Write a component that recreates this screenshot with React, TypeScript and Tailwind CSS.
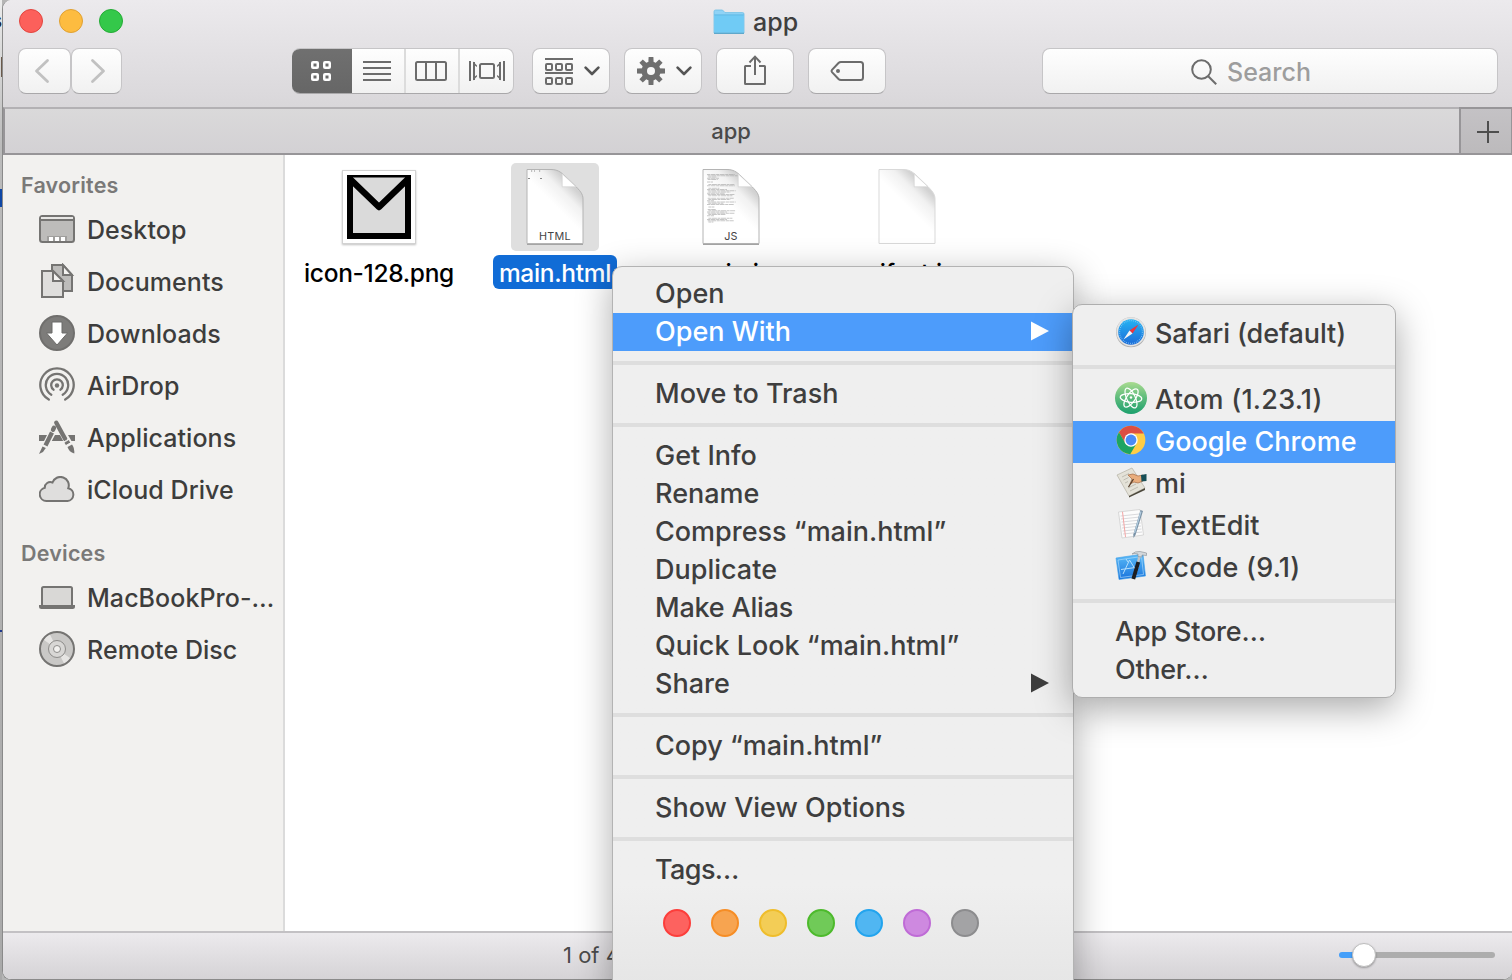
import React from "react";

type Kids = { children?: React.ReactNode };

const btn =
  "flex h-[46px] shrink-0 items-center justify-center rounded-[8px] border border-[#c6c5c7] border-b-[#a9a8aa] bg-linear-to-b from-[#fefefe] to-[#f1f1f1]";

function Chevron() {
  return (
    <svg width="16" height="10" viewBox="0 0 16 10" fill="none" stroke="#555" strokeWidth="2.6" strokeLinecap="round" strokeLinejoin="round">
      <path d="M1.6 1.6 8 8l6.4-6.4" />
    </svg>
  );
}

function TrafficLights() {
  return (
    <div className="flex gap-4">
      <span className="size-6 rounded-full border border-[#e2453f] bg-[#fc605b]" />
      <span className="size-6 rounded-full border border-[#dfa032] bg-[#fdbc40]" />
      <span className="size-6 rounded-full border border-[#24ab35] bg-[#34c84a]" />
    </div>
  );
}

function FolderIcon() {
  return (
    <svg width="32" height="26" viewBox="0 0 32 26">
      <path d="M1 2.5Q1 1 2.5 1H9.500l2.500 2.600H29.500Q31 3.600 31 5V24H1Z" fill="#8fd3f6" stroke="#6fbfe6" strokeWidth=".8" />
      <path d="M1.300 6H30.700V23.500H1.300Z" fill="#70cbf5" />
      <path d="M1.300 5.900H30.700" stroke="#5cb6e2" strokeWidth=".9" />
      <path d="M1 24.300H31" stroke="#55a3c8" strokeWidth="1.200" />
    </svg>
  );
}

function GearIcon() {
  return (
    <svg width="28" height="28" viewBox="-14 -14 28 28" fill="#6f6f6f">
      {[0, 45, 90, 135].map((a) => (
        <path key={a} d="M-2.400-14H2.400L3 0 2.400 14H-2.400L-3 0Z" transform={`rotate(${a})`} />
      ))}
      <circle r="9.600" />
      <circle r="4" fill="#f8f8f8" />
    </svg>
  );
}

function Toolbar() {
  return (
    <div className="flex h-[46px] items-center pl-[15px]">
      <div className={btn + " w-[53px] pr-[6px]"}>
        <svg width="16" height="26" viewBox="0 0 16 26" fill="none" stroke="#c1c1c1" strokeWidth="2.800" strokeLinecap="round" strokeLinejoin="round"><path d="M13.500 2.500 2.500 13l11 10.500" /></svg>
      </div>
      <div className={btn + " w-[51px] pl-[3px]"}>
        <svg width="16" height="26" viewBox="0 0 16 26" fill="none" stroke="#c1c1c1" strokeWidth="2.800" strokeLinecap="round" strokeLinejoin="round"><path d="M2.500 2.500 13.500 13 2.500 23.500" /></svg>
      </div>

      <div className="ml-[170px] flex h-[46px] w-[222px] shrink-0 overflow-hidden rounded-[8px] border border-l-0 border-[#c6c5c7] border-b-[#a9a8aa] bg-linear-to-b from-[#fefefe] to-[#f1f1f1]">
        <div className="-my-px flex w-[60px] items-center justify-center bg-linear-to-b from-[#707070] to-[#666] pr-[2px]">
          <svg width="22" height="22" viewBox="0 0 22 22" fill="none" stroke="#fff" strokeWidth="2.500">
            <rect x="2.250" y="2.250" width="5.500" height="5.500" rx=".8" />
            <rect x="14.250" y="2.250" width="5.500" height="5.500" rx=".8" />
            <rect x="2.250" y="14.250" width="5.500" height="5.500" rx=".8" />
            <rect x="14.250" y="14.250" width="5.500" height="5.500" rx=".8" />
          </svg>
        </div>
        <div className="flex w-[54px] items-center justify-center border-r-2 border-[#dcdcdc] pr-[2px]">
          <svg width="28" height="20" viewBox="0 0 28 20" stroke="#6c6c6c" strokeWidth="2"><path d="M0 1h28M0 7h28M0 13h28M0 19h28" /></svg>
        </div>
        <div className="flex w-[54px] items-center justify-center border-r-2 border-[#dcdcdc] pr-[2px]">
          <svg width="32" height="20" viewBox="0 0 32 20" fill="none" stroke="#6c6c6c" strokeWidth="2"><rect x="1" y="1" width="30" height="18" rx="1.500" /><path d="M11 1v18M21 1v18" /></svg>
        </div>
        <div className="flex w-[53px] items-center justify-center">
          <svg width="36" height="20" viewBox="0 0 36 20" fill="none" stroke="#6c6c6c" strokeWidth="2">
            <path d="M1 0v20M35 0v20M5 1v18M31 1v18" />
            <path d="M4 .5 8 4.500V6L5 4ZM4 19.500 8 15.500V14L5 16ZM32 .5 28 4.500V6l3-2ZM32 19.500 28 15.500V14l3 2Z" fill="#6c6c6c" stroke="none" />
            <rect x="11" y="3" width="14" height="14" rx="1.500" />
          </svg>
        </div>
      </div>

      <div className={btn + " ml-[18px] w-[78px] gap-[11px] pl-[2px]"}>
        <svg width="28" height="28" viewBox="0 0 28 28" fill="none" stroke="#6c6c6c" strokeWidth="2">
          <path d="M0 2h28M0 16h28" />
          {[1, 11, 21].map((x) => (
            <g key={x}><rect x={x} y="7" width="6" height="6" rx="1" /><rect x={x} y="21" width="6" height="6" rx="1" /></g>
          ))}
        </svg>
        <Chevron />
      </div>
      <div className={btn + " ml-[14px] w-[78px] gap-[11px] pl-[2px]"}><GearIcon /><Chevron /></div>
      <div className={btn + " ml-[14px] w-[78px] pb-[3px]"}>
        <svg width="24" height="32" viewBox="0 0 24 32" fill="none" stroke="#6c6c6c" strokeWidth="2"><path d="M8 12H2.500Q2 12 2 12.500V29.500Q2 30 2.500 30H21.500Q22 30 22 29.500V12.500Q22 12 21.500 12H16" /><path d="M12 21V3M6.500 8.500 12 2.600l5.500 5.900" /></svg>
      </div>
      <div className={btn + " ml-[14px] w-[78px]"}>
        <svg width="36" height="22" viewBox="0 0 36 22" fill="none" stroke="#6c6c6c" strokeWidth="2"><path d="M12 2H31.500Q34 2 34 4.500V17.500Q34 20 31.500 20H12Q10.500 20 9.500 19L3 12.200Q2 11 3 9.800L9.500 3Q10.500 2 12 2Z" /><circle cx="9" cy="11" r="2" fill="#6c6c6c" stroke="none" /></svg>
      </div>
      <div className={btn + " ml-[156px] w-[456px] gap-[10px] pr-[38px] text-[25px] font-[450] text-[#9d9d9d]"}>
        <svg className="mt-[2px]" width="26" height="26" viewBox="0 0 26 26" fill="none" stroke="#6c6c6c" strokeWidth="2"><circle cx="10.500" cy="10.500" r="9.300" /><path d="m17.200 17.200 8 8" /></svg>
        <span className="mt-[3px]">Search</span>
      </div>
    </div>
  );
}

const DesktopIcon = () => (
  <svg width="36" height="28" viewBox="0 0 36 28"><rect x="1" y="1" width="34" height="26" rx="2.500" fill="#bdbcba" stroke="#757472" strokeWidth="2" /><path d="M2 2h32v2H2Z" fill="#e8e7e5" /><path d="M1 5h34" stroke="#757472" strokeWidth="2" /><path d="M8 26v-5h20v5" fill="#a09f9d" /><path d="M10 22h4v4h-4ZM16 22h4v4h-4ZM22 22h4v4h-4Z" fill="#fff" /></svg>
);
const DocumentsIcon = () => (
  <svg width="36" height="36" viewBox="0 0 36 36" stroke="#757472" strokeWidth="2"><path d="M13 2H24L33 12V28H13Z" fill="#bdbcba" /><path d="M24 2V12H33Z" fill="#f4f3f1" /><path d="M3 8H14L24 18V34H3Z" fill="#dfdedc" /><path d="M14 8V18H24Z" fill="#f4f3f1" /></svg>
);
const DownloadsIcon = () => (
  <svg width="36" height="36" viewBox="0 0 36 36"><circle cx="18" cy="18" r="17" fill="#7d7c7a" stroke="#706f6d" strokeWidth="2" /><path d="M13 7H23V18H28.500L18 30 7.500 18H13Z" fill="#fff" stroke="#6b6a68" /></svg>
);
const AirDropIcon = () => (
  <svg width="36" height="36" viewBox="0 0 36 36" fill="none" stroke="#757472" strokeWidth="2.300" strokeLinecap="round"><circle cx="18" cy="18.500" r="2.200" fill="#757472" stroke="none" /><path d="M14.500 22.700A5.800 5.800 0 1 1 21.500 22.700M12.300 27.700A11.200 11.200 0 1 1 23.700 27.700M9.800 32.600A16.700 16.700 0 1 1 26.200 32.600" /></svg>
);
const ApplicationsIcon = () => (
  <svg width="36" height="36" viewBox="0 0 36 36" stroke="#757472" fill="#757472">
    <path d="M0 16H8L5 22H0ZM16 16H21L24.200 22H12.800ZM29 16H36V22H32.500Z" stroke="none" />
    <path d="M6.500 26.500 13 13.500" strokeWidth="4.400" />
    <path d="M14 10.800 15 8.800" strokeWidth="4.400" strokeLinecap="round" />
    <path d="M3.500 27.500 6.800 29 4 33 0 35Z" stroke="none" />
    <path d="M17.300 3.800 26.200 20" strokeWidth="4.400" strokeLinecap="round" />
    <path d="M27.600 22.400 29.200 25" strokeWidth="5" />
    <path d="M28.500 28 33 25.500Q35.500 28.500 35.300 34.500 30 33 28.500 28Z" stroke="none" />
    <path d="m25 22.800 5-3M27 26.500l4.500-2.500" stroke="#f2f1ef" strokeWidth="1" />
  </svg>
);
const CloudIcon = () => (
  <svg width="36" height="26" viewBox="0 0 36 26"><path d="M7.500 25A6.700 6.700 0 0 1 5.800 11.800 5.500 5.500 0 0 1 13.500 6.500 8.300 8.300 0 0 1 29.300 12.200 6.500 6.500 0 0 1 28.500 25Z" fill="#dfdedd" stroke="#757472" strokeWidth="2" /></svg>
);
const LaptopIcon = () => (
  <svg width="36" height="24" viewBox="0 0 36 24"><rect x="3" y="2" width="30" height="19" rx="1.500" fill="#d9d8d6" stroke="#757472" strokeWidth="2" /><path d="M0 20H36V21.500Q36 24 33.500 24H2.500Q0 24 0 21.500Z" fill="#757472" /></svg>
);
const DiscIcon = () => (
  <svg width="36" height="36" viewBox="0 0 36 36"><circle cx="18" cy="18" r="17" fill="#c9c8c6" stroke="#757472" strokeWidth="2" /><path d="M18 18 5 9A16 16 0 0 1 11 3.600ZM18 18 31 27A16 16 0 0 1 25 32.400Z" fill="#e6e5e3" /><circle cx="18" cy="18" r="8.500" fill="#d8d7d5" stroke="#8d8c8a" strokeWidth="1" /><circle cx="18" cy="18" r="3.500" fill="#f2f1ef" stroke="#8d8c8a" strokeWidth="1" /></svg>
);

function SideItem({ icon, children }: { icon: React.ReactNode } & Kids) {
  return (
    <li className="flex h-[52px] items-center pl-[36px] text-[25px] font-[450] tracking-[.06px] text-[#3d3d3c]">
      <span className="flex w-[36px] shrink-0 justify-center pb-[2px]">{icon}</span>
      <span className="ml-[12px] whitespace-nowrap">{children}</span>
    </li>
  );
}

function Sidebar() {
  return (
    <nav className="w-[282px] shrink-0 border-r-2 border-[#dbdbdb] bg-[#f2f1ef]">
      <h2 className="mt-[9px] flex h-[40px] items-center pl-[18px] pt-[3px] text-[21.5px] font-semibold tracking-[.2px] text-[#7a7978]">Favorites</h2>
      <ul>
        <SideItem icon={<DesktopIcon />}>Desktop</SideItem>
        <SideItem icon={<DocumentsIcon />}>Documents</SideItem>
        <SideItem icon={<DownloadsIcon />}>Downloads</SideItem>
        <SideItem icon={<AirDropIcon />}>AirDrop</SideItem>
        <SideItem icon={<ApplicationsIcon />}>Applications</SideItem>
        <SideItem icon={<CloudIcon />}>iCloud Drive</SideItem>
      </ul>
      <h2 className="mt-[16px] flex h-[40px] items-center pl-[18px] pt-[3px] text-[21.5px] font-semibold tracking-[.2px] text-[#7a7978]">Devices</h2>
      <ul>
        <SideItem icon={<LaptopIcon />}>MacBookPro-…</SideItem>
        <SideItem icon={<DiscIcon />}>Remote Disc</SideItem>
      </ul>
    </nav>
  );
}

function Page({ label, code, dots, faint }: { label?: string; code?: boolean; dots?: boolean; faint?: boolean }) {
  const widths = [28, 30, 8, 12, 10, 0, 6, 0, 26, 28, 0, 11, 20, 28, 22, 18, 27, 24, 0, 26, 22, 7, 28, 15, 27, 0, 6, 0, 8, 27, 20, 27, 17, 7, 0, 24, 20, 26, 5];
  return (
    <svg width="64" height="82" viewBox="0 0 64 82">
      <defs>
        <linearGradient id="fold" x1="0" y1="77" x2="60" y2="17" gradientUnits="userSpaceOnUse"><stop offset=".58" stopColor="#fff" /><stop offset=".76" stopColor="#f1f1f1" /><stop offset=".88" stopColor="#d2d2d2" /></linearGradient>
      </defs>
      <path d="M4 3.500H28C34 3.500 37.500 5.700 42 10L51 18.700C57 24.500 60 28 60 33V77.500H4Z" fill="url(#fold)" stroke={faint ? "#d9d9d9" : "#b4b4b4"} />
      {!faint && <path d="M4 78.500H60" stroke="#a5a5a5" />}
      {code && widths.map((w, i) => <path key={i} d={`M${8 + (i % 3) * 0.7} ${8.5 + i * 1.25}h${w}`} stroke="#a9a9a9" strokeWidth=".65" strokeDasharray="3 .5 5 .6" />)}
      <path d="M39.200 7.800V20.800H53Z" fill="#fff" stroke="#d2d2d2" strokeWidth=".7" />
      {dots && <path d="M8 5h1.200M11 5h1M16 5h1.200M5 12.500h2M17 12.500h2" stroke="#888" strokeWidth="1.200" />}
      {label && <text x="32" y="74" textAnchor="middle" fontSize="10.800" letterSpacing=".3" fill="#444">{label}</text>}
    </svg>
  );
}

function FileItem({ icon, name, selected }: { icon: React.ReactNode; name: string; selected?: boolean }) {
  return (
    <div className="flex w-[176px] shrink-0 flex-col items-center">
      <div className={"flex size-[88px] items-center justify-center rounded-[5px] " + (selected ? "bg-[#dfdfdf]" : "")}>{icon}</div>
      <div className={"mt-[4px] flex h-[34px] items-center whitespace-nowrap rounded-[6px] px-[6px] pt-[2px] text-[24.5px] font-[450] tracking-[-.32px] " + (selected ? "bg-[#116cd6] text-white" : "text-black")}>{name}</div>
    </div>
  );
}

function MailImage() {
  return (
    <div className="size-[74px] border border-[#d2d2d2] bg-white p-[4px] shadow-[0_1px_2px_rgba(0,0,0,.25)]">
      <svg width="64" height="64" viewBox="0 0 64 64"><rect width="64" height="64" fill="#000" /><rect x="6" y="2" width="52" height="56" fill="#dadada" /><path d="M2 3 32 32 62 3" fill="none" stroke="#000" strokeWidth="6.500" strokeLinejoin="round" /><path d="M0 1.500h64" stroke="#000" strokeWidth="2" /></svg>
    </div>
  );
}

function Item({ children, active, arrow }: { active?: boolean; arrow?: boolean } & Kids) {
  return (
    <div className={"flex h-[38px] items-center justify-between pl-[42px] pr-[24px] " + (active ? "bg-[#4d9cfb] text-white" : "")}>
      <span className="whitespace-nowrap pb-[2px]">{children}</span>
      {arrow && <svg width="18" height="20" viewBox="0 0 18 20" className="-mt-[2px]" fill="currentColor"><path d="M0 .5 18 10 0 19.500Z" /></svg>}
    </div>
  );
}

const Sep = () => <div className="my-[10px] h-[4px] bg-[#dedede]" />;

const SafariIcon = () => (
  <svg width="32" height="32" viewBox="0 0 32 32">
    <defs><linearGradient id="saf" x1="0" y1="0" x2="0" y2="1"><stop stopColor="#25b4f3" /><stop offset="1" stopColor="#1c6bd8" /></linearGradient></defs>
    <circle cx="16" cy="16.300" r="15" fill="#b0b0b0" /><circle cx="16" cy="15.800" r="14.600" fill="#e4e4e4" />
    <circle cx="16" cy="16" r="12.800" fill="url(#saf)" />
    <circle cx="16" cy="16" r="11.400" fill="none" stroke="#7fc4f4" strokeWidth="1.200" strokeDasharray=".8 1.190" />
    <path d="M23.500 8.500 14.500 14.500 17.500 17.500Z" fill="#f0343a" /><path d="M8.500 23.500 14.500 14.500 17.500 17.500Z" fill="#f5f5f5" />
  </svg>
);
const AtomIcon = () => (
  <svg width="32" height="32" viewBox="0 0 32 32">
    <defs><linearGradient id="atm" x1="0" y1="0" x2="0" y2="1"><stop stopColor="#a9db90" /><stop offset=".5" stopColor="#5dbb7c" /><stop offset="1" stopColor="#1ba06d" /></linearGradient></defs>
    <circle cx="16" cy="16" r="16" fill="url(#atm)" />
    <g fill="none" stroke="#fff" strokeWidth="1.200"><ellipse cx="16" cy="16" rx="10.800" ry="4.300" transform="rotate(5 16 16)" /><ellipse cx="16" cy="16" rx="10.800" ry="4.300" transform="rotate(65 16 16)" /><ellipse cx="16" cy="16" rx="10.800" ry="4.300" transform="rotate(125 16 16)" /></g>
    <circle cx="16" cy="15.500" r="1.200" fill="#fff" />
  </svg>
);
const ChromeIcon = () => (
  <svg width="30" height="30" viewBox="1 1 46 46">
    <circle cx="24" cy="24" r="22" fill="#ffcd46" />
    <path d="M5.540 12.030A22 22 0 0 1 43.600 14H24L15.340 29Z" fill="#dd4f43" />
    <path d="M5.540 12.030 15.340 29 32.660 29 22.860 45.970A22 22 0 0 1 5.540 12.030Z" fill="#1da462" />
    <circle cx="24" cy="24" r="10.300" fill="#fff" /><circle cx="24" cy="24" r="8.300" fill="#4a8bf5" />
  </svg>
);
const MiIcon = () => (
  <svg width="32" height="32" viewBox="0 0 32 32">
    <path d="M2 9 17 2 30 22 14 30Z" fill="#e4e2d8" stroke="#b3b0a4" strokeWidth=".7" /><path d="M14 30 30 22V24L14 31.500Z" fill="#4b473b" />
    <path d="M7 11l7-3.500M8.500 14l5-2.500M10 17l3-1.500M13 22l8-4M15 25l8-4" stroke="#b5b2a8" strokeWidth=".8" />
    <path d="M15 18 17 13 13 9 18 8 23 10 28 9V15L23 17 19 16Z" fill="#e9ad7d" stroke="#a46842" strokeWidth=".7" />
    <path d="M26 9 31.500 8V15L26.500 15.500Z" fill="#174e56" /><path d="m13.500 21 5-8" stroke="#533d2c" strokeWidth="1.300" />
  </svg>
);
const TextEditIcon = () => (
  <svg width="32" height="32" viewBox="0 0 32 32">
    <path d="M3.500 4 25 1.500 28.500 27 7 30Z" fill="#fcfcfc" stroke="#cfcfcf" strokeWidth=".8" />
    <path d="m5.500 8 19-2M6 11l19-2M6.500 14l19-2M6.800 17l19-2M7 20l19-2M7.500 23l19-2M8 26l19-2" stroke="#d0d0d4" strokeWidth=".8" />
    <path d="M7.500 3.800 10.500 29" stroke="#f4a5a5" strokeWidth="1" />
    <path d="M25.500 2 28 3 20.500 27 18.500 30 18.300 26.500Z" fill="#7890a5" /><path d="M26 3.500 19.500 25" stroke="#b4cde0" strokeWidth="1.200" />
  </svg>
);
const XcodeIcon = () => (
  <svg width="32" height="32" viewBox="0 0 32 32">
    <defs><linearGradient id="xc" x1="0" y1="0" x2="0" y2="1"><stop stopColor="#5bbcf8" /><stop offset="1" stopColor="#1873dc" /></linearGradient></defs>
    <path d="M1 8 28 4 30.500 26 4 29.500Z" fill="url(#xc)" stroke="#3f9fe8" strokeWidth=".6" />
    <path d="M3 10 26.500 6.500 28.500 24.500 5.500 27.500Z" fill="none" stroke="#b8e1fc" strokeWidth=".6" />
    <path d="M8 24 14.500 10 22 22M6 19.500 24 17M11 9l2 3" fill="none" stroke="#b5dffc" strokeWidth="1" />
    <path d="M25 5 22.500 14" stroke="#c0c4c8" strokeWidth="2.600" /><path d="M23.300 12 18.300 29" stroke="#1d1d20" strokeWidth="3.800" />
    <path d="M17 4Q20 1 25 1.500L31.500 3V5.500L27 5V7L23 6.500V4Q20 3 17 4Z" fill="#d3d8dc" stroke="#858b91" strokeWidth=".6" />
  </svg>
);

function AppItem({ icon, active, children }: { icon: React.ReactNode; active?: boolean } & Kids) {
  return (
    <div className={"flex h-[42px] items-center pl-[42px] " + (active ? "bg-[#4d9cfb] text-white" : "")}>
      <span className="-mt-[4px] flex w-[32px] shrink-0 justify-center">{icon}</span>
      <span className="ml-[8px] whitespace-nowrap pb-[2px]">{children}</span>
    </div>
  );
}

function ContextMenu() {
  return (
    <div className="absolute left-[612px] top-[266px] h-[730px] w-[462px] rounded-t-[10px] border border-[#b3b3b3] bg-[#efefef] bg-linear-to-b from-[#efefef] from-85% to-[#e5e5e5] pt-[8px] text-[27px] font-[450] text-[#3e3e3e] shadow-[0_10px_36px_rgba(0,0,0,.32)]">
      <Item>Open</Item>
      <Item active arrow>Open With</Item>
      <Sep />
      <Item>Move to Trash</Item>
      <Sep />
      <Item>Get Info</Item>
      <Item>Rename</Item>
      <Item>Compress “main.html”</Item>
      <Item>Duplicate</Item>
      <Item><span className="tracking-[-.2px]">Make Alias</span></Item>
      <Item>Quick Look “main.html”</Item>
      <Item arrow>Share</Item>
      <Sep />
      <Item>Copy “main.html”</Item>
      <Sep />
      <Item>Show View Options</Item>
      <Sep />
      <Item><span className="tracking-[-.6px]">Tags…</span></Item>
      <div className="mt-[20px] flex gap-5 pl-[50px]">
        <span className="size-7 rounded-full border-2 border-[#fc3e3b] bg-[#fd625f]" />
        <span className="size-7 rounded-full border-2 border-[#f68d25] bg-[#f7a450]" />
        <span className="size-7 rounded-full border-2 border-[#efbd2b] bg-[#f3cd56]" />
        <span className="size-7 rounded-full border-2 border-[#4dba2c] bg-[#70ca58]" />
        <span className="size-7 rounded-full border-2 border-[#22a4ee] bg-[#50b6f2]" />
        <span className="size-7 rounded-full border-2 border-[#bf6bd6] bg-[#ce89e0]" />
        <span className="size-7 rounded-full border-2 border-[#8c8c8e] bg-[#a3a3a5]" />
      </div>
    </div>
  );
}

function SubMenu() {
  return (
    <div className="absolute left-[1072px] top-[304px] h-[394px] w-[324px] rounded-[10px] border border-[#aeaeae] bg-[#efefef] pt-[8px] text-[27px] font-[450] text-[#3e3e3e] shadow-[0_10px_36px_rgba(0,0,0,.34)]">
      <AppItem icon={<SafariIcon />}><span className="tracking-[-.1px]">Safari (default)</span></AppItem>
      <Sep />
      <AppItem icon={<AtomIcon />}><span className="tracking-[.25px]">Atom (1.23.1)</span></AppItem>
      <AppItem icon={<ChromeIcon />} active>Google Chrome</AppItem>
      <AppItem icon={<MiIcon />}>mi</AppItem>
      <AppItem icon={<TextEditIcon />}>TextEdit</AppItem>
      <AppItem icon={<XcodeIcon />}><span className="tracking-[.2px]">Xcode (9.1)</span></AppItem>
      <Sep />
      <Item><span className="tracking-[-.2px]">App Store…</span></Item>
      <Item><span className="tracking-[-.3px]">Other…</span></Item>
    </div>
  );
}

export default function App() {
  return (
    <div className="relative flex h-[980px] w-[1512px] overflow-hidden bg-[#b5b5b5] font-['Inter','Liberation_Sans',sans-serif] leading-none">
      <div className="flex w-[2px] shrink-0 flex-col items-end overflow-hidden bg-linear-to-b from-[#ececec] via-[#bbb] via-15% to-[#a9a9a9] text-[22px] text-[#1d2730]">
        <span className="mt-[9px] h-[22px] font-bold">s</span>
        <span className="mt-[26px] h-[20px] w-px bg-[#6b5a4c]" />
        <span className="mt-[112px] h-[18px] w-[2px] bg-[#0f47a5]" />
        <span className="mt-[423px] h-[2px] w-[2px] bg-[#203a8c]" />
      </div>
      <div className="flex h-[980px] w-[1510px] shrink-0 flex-col overflow-hidden rounded-l-[9px] rounded-br-[9px] border-b border-l border-[#8a8a8a] bg-white">
        <header className="h-[107px] shrink-0 bg-linear-to-b from-[#eceaed] to-[#d9d7da]">
          <div className="grid h-[48px] grid-cols-[710px_1fr] items-start">
            <div className="pl-[16px] pt-[9px]"><TrafficLights /></div>
            <div className="flex items-center gap-[8px] pt-[8px] text-[25px] font-[450] text-[#3f3f3f]">
              <FolderIcon />
              <span className="pt-[2px]">app</span>
            </div>
          </div>
          <Toolbar />
        </header>
        <div className="flex h-[48px] shrink-0">
          <div className="flex w-[1456px] items-center justify-center border-y-2 border-l-2 border-t-[#b3b1b4] border-b-[#979598] border-l-[#979598] bg-linear-to-b from-[#dad9da] to-[#d3d1d4] pr-[2px] text-[22px] font-[450] text-[#4a4a4a]">app</div>
          <div className="flex w-[53px] items-center justify-center border-y-2 border-l-2 border-r border-[#979598] bg-linear-to-b from-[#c4c2c5] to-[#bcbabc] pl-[4px] pt-[2px]">
            <svg width="22" height="22" viewBox="0 0 22 22" stroke="#4e4e4e" strokeWidth="2"><path d="M0 11h22M11 0v22" /></svg>
          </div>
        </div>
        <div className="flex h-[776px] shrink-0">
          <Sidebar />
          <main className="flex flex-1 items-start pl-[6px] pt-[8px]">
            <FileItem icon={<MailImage />} name="icon-128.png" />
            <FileItem icon={<Page label="HTML" dots />} name="main.html" selected />
            <FileItem icon={<Page label="JS" code />} name="main.js" />
            <FileItem icon={<Page faint />} name="manifest.json" />
          </main>
        </div>
        <footer className="flex flex-1 items-center border-t-2 border-[#c3c1c4] bg-linear-to-b from-[#eceaed] to-[#d5d3d6] pb-[2px] text-[22px] text-[#4b4b4b]">
          <span className="ml-[560px] w-[200px] whitespace-nowrap">1 of 4 selected</span>
          <div className="ml-auto mr-[17px] flex h-6 w-[156px] items-center">
            <span className="h-[6px] w-[16px] rounded-l-full bg-[#459ff9]" />
            <span className="relative -mx-[3px] size-6 shrink-0 rounded-full border border-[#bdbdbd] bg-white shadow-[0_1px_2px_rgba(0,0,0,.3)]" />
            <span className="h-[6px] flex-1 rounded-r-full bg-[#adadad]" />
          </div>
        </footer>
      </div>
      <ContextMenu />
      <SubMenu />
    </div>
  );
}
